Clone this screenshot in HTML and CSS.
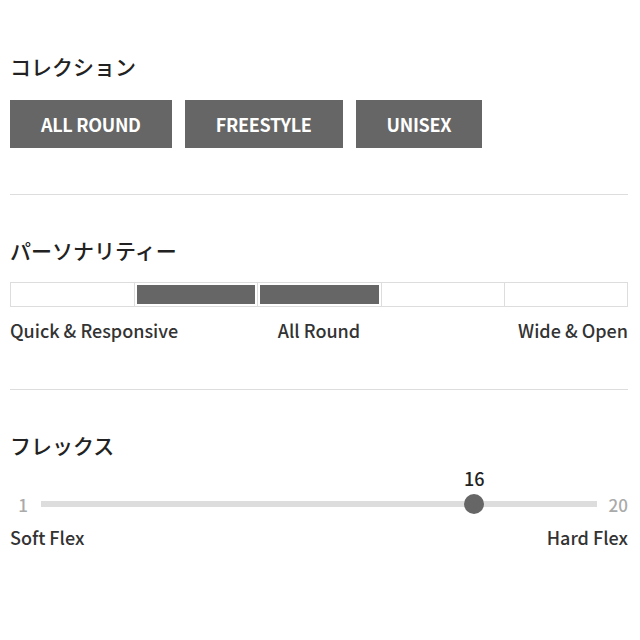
FILE: index.html
```html
<!DOCTYPE html>
<html lang="ja">
<head>
    <meta charset="UTF-8">
    <meta name="viewport" content="width=device-width, initial-scale=1.0">
    <title>スペック</title>
    <link rel="stylesheet" href="styles.css">
</head>
<body>
<div class="page">

    <!-- Collection -->
    <section class="spec">
        <h2 class="spec-title">コレクション</h2>
        <div class="tags">
            <span class="tag">ALL ROUND</span>
            <span class="tag">FREESTYLE</span>
            <span class="tag">UNISEX</span>
        </div>
    </section>

    <!-- Personality -->
    <section class="spec">
        <h2 class="spec-title">パーソナリティー</h2>
        <div class="scale">
            <div class="scale-cell"></div>
            <div class="scale-cell is-on"></div>
            <div class="scale-cell is-on"></div>
            <div class="scale-cell"></div>
            <div class="scale-cell"></div>
        </div>
        <div class="scale-labels">
            <span>Quick &amp; Responsive</span>
            <span>All Round</span>
            <span class="right">Wide &amp; Open</span>
        </div>
    </section>

    <!-- Flex -->
    <section class="spec last">
        <h2 class="spec-title">フレックス</h2>
        <div class="slider">
            <span class="slider-min">1</span>
            <div class="slider-track">
                <div class="slider-rail">
                    <div class="slider-knob" style="left: 78.95%;">
                        <span class="slider-value">16</span>
                    </div>
                </div>
            </div>
            <span class="slider-max">20</span>
        </div>
        <div class="flex-labels">
            <span>Soft Flex</span>
            <span>Hard Flex</span>
        </div>
    </section>

</div>
</body>
</html>
```

FILE: styles.css
```css
html, body {
    margin: 0;
    background: #ffffff;
}

body {
    font-family: "Noto Sans CJK JP", "Noto Sans", sans-serif;
    color: #222;
}

.page {
    padding: 11px 12px 0 10px;
}

.spec {
    padding: 40px 0 46px;
    border-bottom: 1px solid #dddddd;
}

.spec + .spec {
    padding-bottom: 47px;
}

.spec.last {
    border-bottom: none;
}

.spec-title {
    margin: 0;
    font-size: 21px;
    line-height: 30px;
    font-weight: 500;
    color: #222;
}

/* collection tags */
.tags {
    display: flex;
    gap: 13px;
    margin-top: 19px;
}

.tag {
    display: flex;
    align-items: center;
    height: 48px;
    padding: 0 31px;
    background: #666666;
    color: #ffffff;
    font-size: 18px;
    font-weight: 700;
    letter-spacing: -0.3px;
}

/* personality scale */
.scale {
    display: grid;
    grid-template-columns: repeat(5, 1fr);
    height: 23px;
    margin-top: 17px;
    border: 1px solid #dddddd;
}

.scale-cell + .scale-cell {
    border-left: 1px solid #dddddd;
}

.scale-cell.is-on {
    background: #666666;
    background-clip: content-box;
    padding: 2px;
}

.scale-labels {
    display: grid;
    grid-template-columns: 1fr auto 1fr;
    margin-top: 11px;
    font-size: 18px;
    line-height: 24px;
    font-weight: 500;
    color: #333;
}

.scale-labels .right {
    text-align: right;
}

/* flex slider */
.slider {
    display: flex;
    align-items: center;
    height: 20px;
    margin-top: 34px;
}

.slider-min,
.slider-max {
    width: 31px;
    font-size: 17px;
    color: #aaaaaa;
    font-weight: 500;
    box-sizing: border-box;
}

.slider-min {
    text-align: center;
    padding-right: 5px;
}

.slider-max {
    text-align: right;
}

.slider-track {
    flex: 1;
    height: 6px;
    padding: 0 10px;
    background: #dddddd;
}

.slider-rail {
    position: relative;
    height: 100%;
}

.slider-knob {
    position: absolute;
    top: 50%;
    width: 20px;
    height: 20px;
    border-radius: 50%;
    background: #666666;
    transform: translate(-50%, -50%);
}

.slider-value {
    position: absolute;
    bottom: 100%;
    left: 50%;
    margin-bottom: 4px;
    transform: translateX(-50%);
    font-size: 18px;
    line-height: 24px;
    font-weight: 500;
    color: #222;
}

.flex-labels {
    display: flex;
    justify-content: space-between;
    margin-top: 11px;
    font-size: 18px;
    line-height: 24px;
    font-weight: 500;
    color: #333;
}
```
